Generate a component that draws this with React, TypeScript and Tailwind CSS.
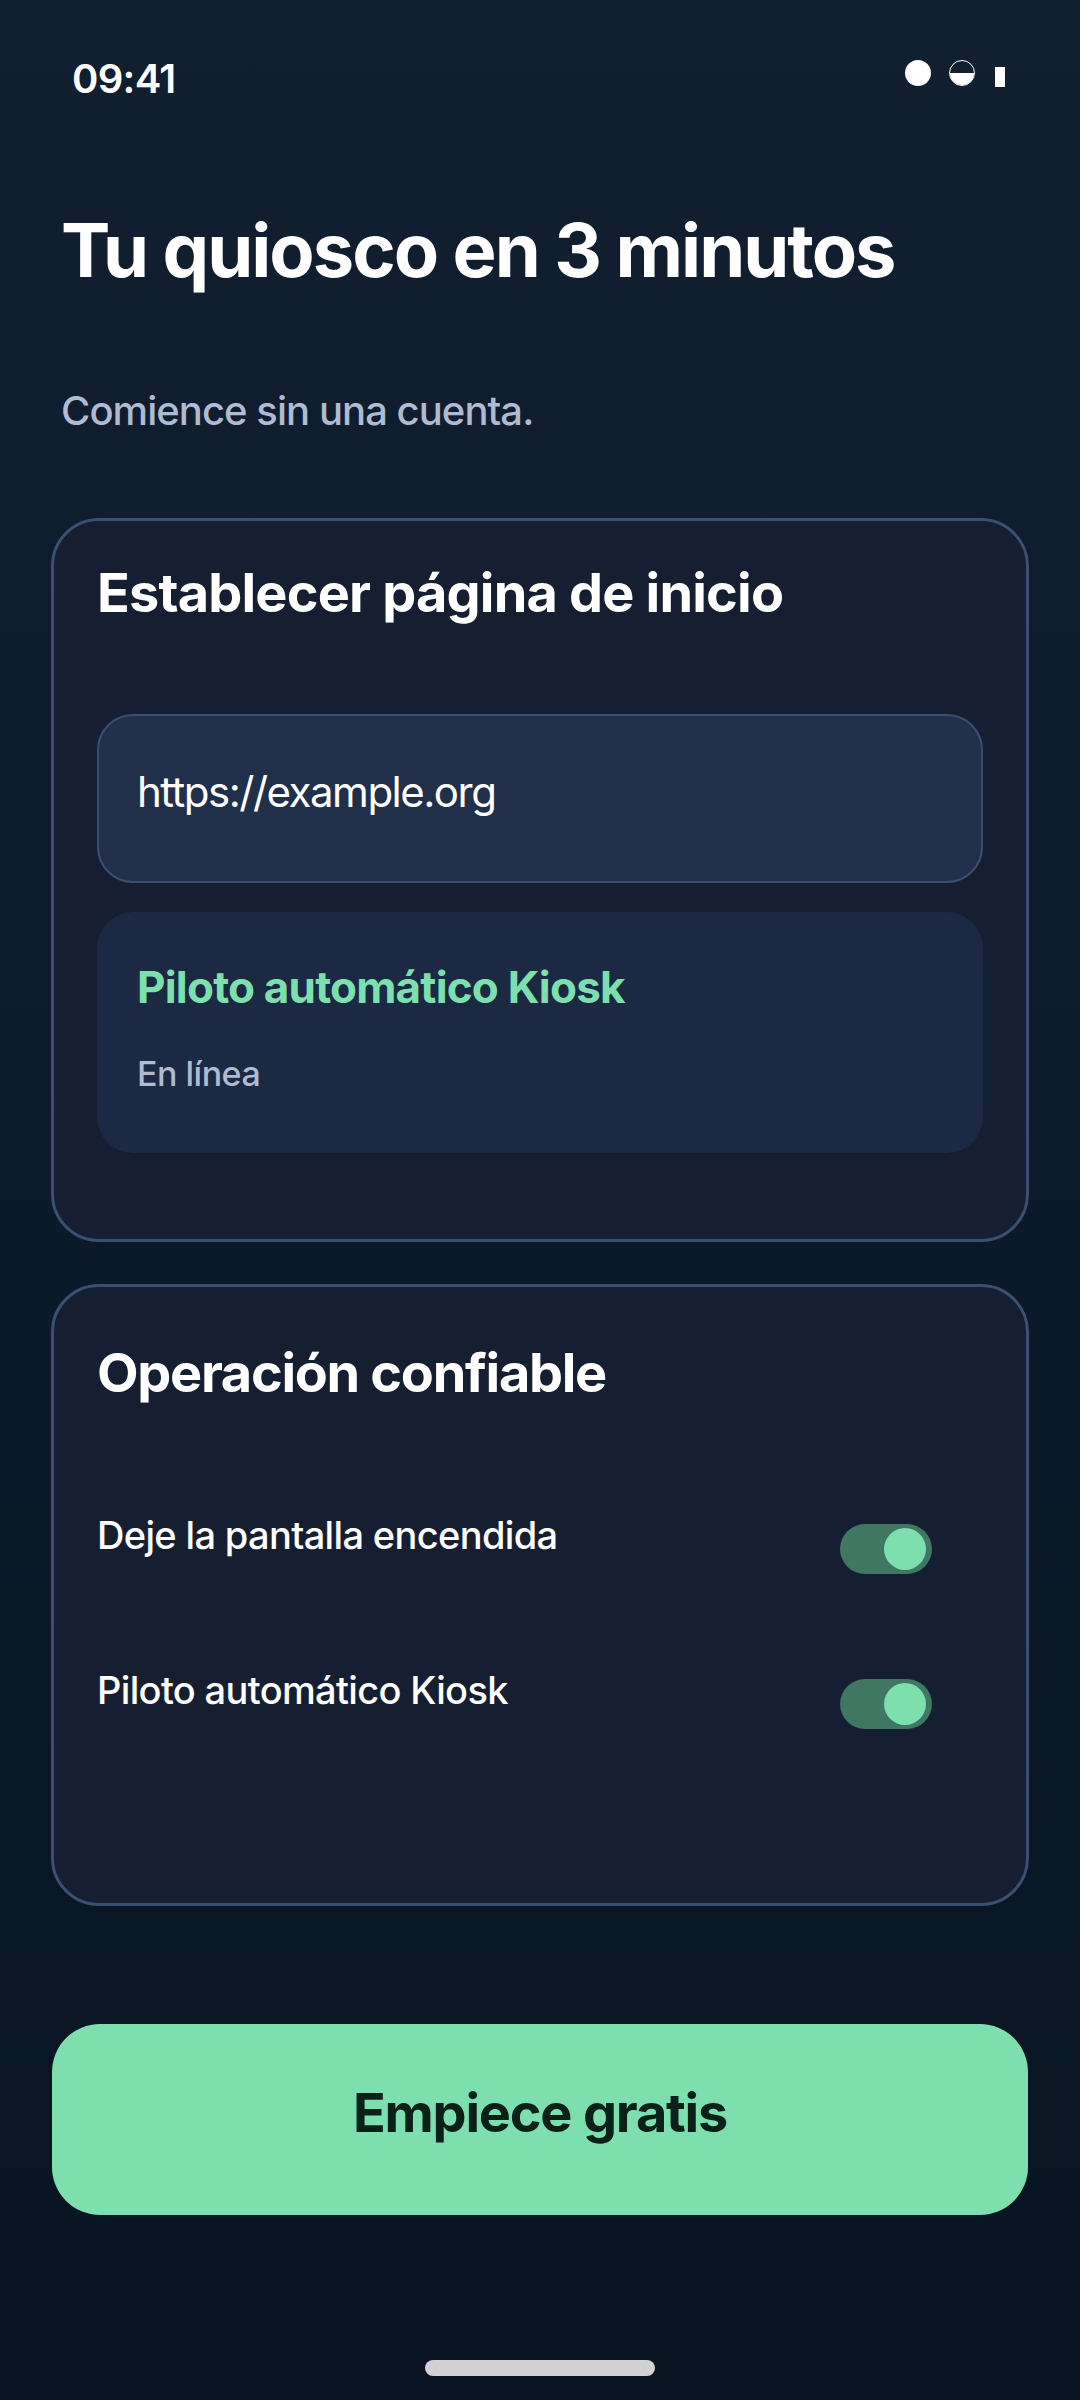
export default function App() {
  const Toggle = () => (
    <div className="w-[92px] h-[50px] rounded-full bg-[#3f7763] flex items-center justify-end pr-[6px] shrink-0">
      <div className="w-[42px] h-[42px] rounded-full bg-[#7ddfae]" />
    </div>
  );
  return (
    <div className="w-[1080px] h-[2400px] overflow-hidden flex flex-col bg-gradient-to-b from-[#111f30] to-[#081421] font-['Inter',sans-serif] text-white">
      <div className="flex justify-between items-start pt-[56px] pl-[72px] pr-[75px] h-[120px]">
        <span className="text-[40px] leading-[46px] font-semibold tracking-[-0.7px]">09:41</span>
        <div className="flex items-start pt-[4px]">
          <div className="w-[26px] h-[26px] rounded-full bg-white" />
          <div className="ml-[18px] w-[26px] h-[26px] rounded-full border border-white overflow-hidden flex flex-col justify-end">
            <div className="h-[12px] bg-white" />
          </div>
          <div className="ml-[20px] mt-[7px] w-[10px] h-[20px] bg-white" />
        </div>
      </div>
      <h1 className="mt-[84px] ml-[61px] text-[74px] leading-[92px] font-bold tracking-[-2px]">Tu quiosco en 3 minutos</h1>
      <p className="mt-[91px] ml-[61px] text-[40px] leading-[48px] font-medium text-[#aebbd0] tracking-[-0.95px]">Comience sin una cuenta.</p>
      <section className="mt-[83px] mx-[51px] h-[724px] rounded-[48px] border-[3px] border-[#3b5070] bg-[#151f31] px-[43px]">
        <h2 className="mt-[40px] text-[54px] leading-[64px] font-bold tracking-[-0.8px]">Establecer página de inicio</h2>
        <div className="mt-[89px] h-[169px] rounded-[36px] border-[2px] border-[#3b5070] bg-[#20304a] pl-[38px] pt-[52px] text-[42px] leading-[48px] tracking-[-1.5px]">https://example.org</div>
        <div className="mt-[29px] h-[241px] rounded-[36px] bg-[#1b2a42] pl-[40px] pt-[50px]">
          <div className="text-[44px] leading-[50px] font-bold text-[#7ddfae] tracking-[-0.8px]">Piloto automático Kiosk</div>
          <div className="mt-[42px] text-[34px] leading-[40px] font-medium text-[#aebbd0] tracking-[-0.5px]">En línea</div>
        </div>
      </section>
      <section className="mt-[42px] mx-[51px] h-[622px] rounded-[48px] border-[3px] border-[#3b5070] bg-[#151f31] px-[43px]">
        <h2 className="mt-[54px] text-[54px] leading-[64px] font-bold tracking-[-1.3px]">Operación confiable</h2>
        <div className="mt-[107px] flex justify-between pr-[51px]">
          <span className="text-[38px] leading-[46px] font-medium tracking-[-0.65px]">Deje la pantalla encendida</span>
          <div className="mt-[12px]"><Toggle /></div>
        </div>
        <div className="mt-[93px] flex justify-between pr-[51px]">
          <span className="text-[38px] leading-[46px] font-medium tracking-[-0.65px]">Piloto automático Kiosk</span>
          <div className="mt-[12px]"><Toggle /></div>
        </div>
      </section>
      <button className="mt-[118px] mx-[52px] h-[191px] rounded-[48px] bg-[#7ddfae] text-[#0a2118] text-[54px] font-bold tracking-[-1.2px] pb-[15px] flex items-center justify-center">Empiece gratis</button>
      <div className="mt-[145px] mx-auto w-[230px] h-[16px] rounded-[8px] bg-[#d0d2d6]" />
    </div>
  );
}
